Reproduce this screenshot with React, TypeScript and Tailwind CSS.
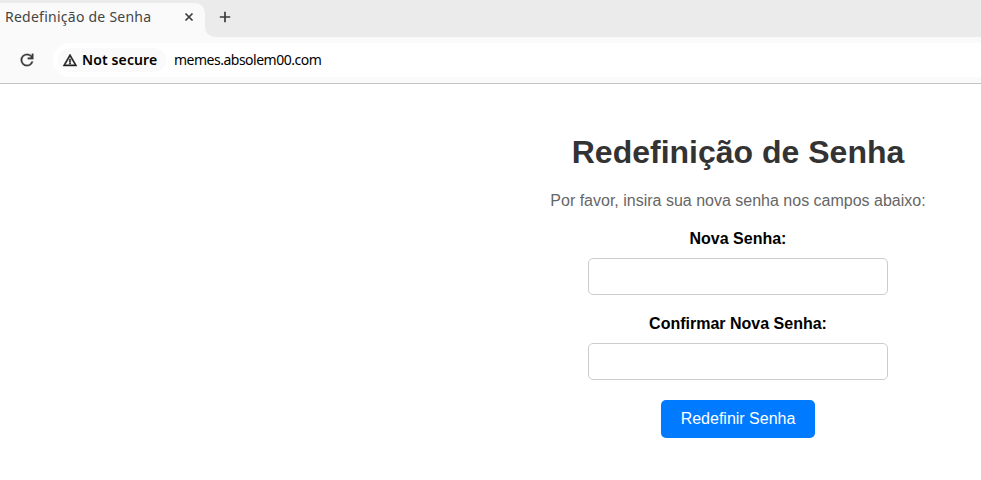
import React from "react";

function TabStrip() {
  return (
    <div className="flex h-[37px] bg-[#ebebeb] pt-[3px] text-[#3c3c3c]">
      <div className="flex h-[34px] w-[205px] items-start justify-between rounded-tr-[10px] bg-[#fafafa] pt-1 pr-[11px] pl-[5px]">
        <span className="text-[14px] leading-5 tracking-[0.25px] whitespace-nowrap text-[#454545]">
          Redefinição de Senha
        </span>
        <svg className="mt-[5px]" width="10" height="10" viewBox="0 0 10 10" stroke="#3c3c3c" strokeWidth="1.7">
          <path d="M1.5 1.5 8.5 8.5M8.5 1.5 1.5 8.5" />
        </svg>
      </div>
      <svg className="self-end" width="10" height="10" viewBox="0 0 10 10" fill="#fafafa">
        <path d="M0 0A10 10 0 0 0 10 10H0Z" />
      </svg>
      <svg className="mt-2 ml-[4px]" width="12" height="12" viewBox="0 0 12 12" stroke="#3c3c3c" strokeWidth="1.7">
        <path d="M6 .8V11.2M.8 6H11.2" />
      </svg>
    </div>
  );
}

function Toolbar() {
  return (
    <div className="flex h-[47px] items-center border-b border-[#c4c4c4] bg-[#fafafa] pl-[20px] text-black">
      <svg width="14" height="14" viewBox="3.2 3.2 17.6 17.6" fill="#3c3c3c" stroke="#3c3c3c" strokeWidth=".3">
        <path d="M12 20q-3.35 0-5.675-2.325T4 12t2.325-5.675T12 4q1.725 0 3.3.713T18 6.75V4h2v7h-7V9h4.2q-.8-1.4-2.187-2.2T12 6Q9.5 6 7.75 7.75T6 12t1.75 4.25T12 18q1.925 0 3.475-1.1T17.65 14h2.1q-.7 2.65-2.85 4.325T12 20Z" />
      </svg>
      <div className="ml-[19px] flex h-[34px] flex-1 items-center rounded-l-full bg-white pl-[5px]">
        <div className="flex h-6 w-[108px] items-center rounded-full bg-[#fafafa] pl-[5px]">
          <svg width="14" height="12" viewBox="1 2 22 19" fill="#1f1f1f" stroke="#1f1f1f" strokeWidth=".7" overflow="visible">
            <path d="M1 21 12 2l11 19H1Zm3.45-2h15.1L12 6 4.45 19ZM11 16v2h2v-2h-2Zm0-6v5h2v-5h-2Z" fillRule="evenodd" />
          </svg>
          <span className="ml-[5px] text-[14px] leading-5 font-semibold tracking-[0.12px] whitespace-nowrap">
            Not secure
          </span>
        </div>
        <span className="ml-2 text-[14px] leading-5 tracking-[-0.5px] whitespace-nowrap">memes.absolem00.com</span>
      </div>
    </div>
  );
}

function PasswordField({ id, label }: { id: string; label: string }) {
  return (
    <div className="mb-5 flex flex-col items-center">
      <label htmlFor={id} className="mb-[10px] text-[16px] leading-[18px] font-bold text-black">
        {label}
      </label>
      <input id={id} type="password" className="h-[37px] w-[300px] rounded-[5px] border border-[#ccc] bg-white px-2.5" />
    </div>
  );
}

export default function App() {
  return (
    <div className="h-[480px] w-[981px] overflow-hidden bg-white">
      <header className="font-['Noto_Sans',sans-serif]">
        <TabStrip />
        <Toolbar />
      </header>
      <main className="ml-[538px] flex w-[400px] flex-col items-center pt-[50px] font-['Liberation_Sans',Arial,sans-serif]">
        <h1 className="text-[32px] leading-[36px] font-bold whitespace-nowrap text-[#333]">Redefinição de Senha</h1>
        <p className="mt-[22px] mb-5 text-[16px] leading-[18px] whitespace-nowrap text-[#666]">
          Por favor, insira sua nova senha nos campos abaixo:
        </p>
        <form className="flex flex-col items-center" onSubmit={(e) => e.preventDefault()}>
          <PasswordField id="nova" label="Nova Senha:" />
          <PasswordField id="confirmar" label="Confirmar Nova Senha:" />
          <button className="h-[38px] rounded-[5px] bg-[#007bff] px-5 text-[16px] leading-[18px] text-white">
            Redefinir Senha
          </button>
        </form>
      </main>
    </div>
  );
}
